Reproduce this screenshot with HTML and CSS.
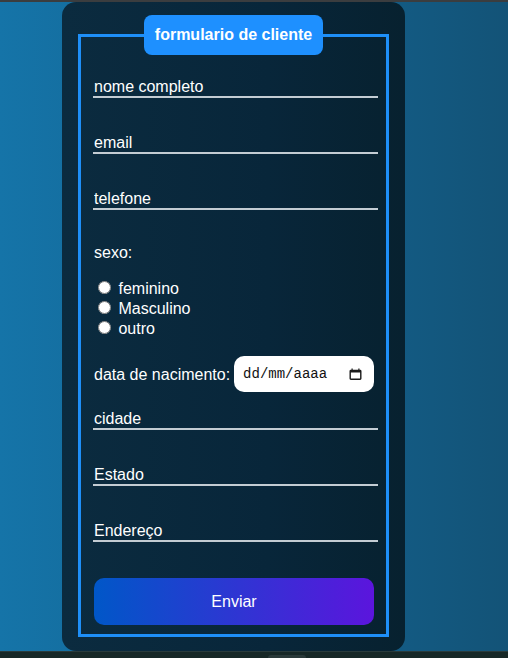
FILE: index.html
```html
<!DOCTYPE html>
<html lang="pt-BR">
<head>
<meta charset="utf-8">
<title>formulario de cliente</title>
<link rel="stylesheet" href="styles.css">
</head>
<body>
<div class="topbar"></div>
<main class="stage">
  <form class="card">
    <fieldset class="frame">
      <legend class="title">formulario de cliente</legend>
      <input class="field" type="text" placeholder="nome completo">
      <input class="field" type="email" placeholder="email">
      <input class="field" type="tel" placeholder="telefone">
      <p class="label">sexo:</p>
      <div class="radios">
        <div class="opt"><input type="radio" name="sexo" id="sx-f"> <label for="sx-f">feminino</label></div>
        <div class="opt"><input type="radio" name="sexo" id="sx-m"> <label for="sx-m">Masculino</label></div>
        <div class="opt"><input type="radio" name="sexo" id="sx-o"> <label for="sx-o">outro</label></div>
      </div>
      <div class="date-row">
        <span class="date-label">data de nacimento:</span>
        <div class="date">
          <span class="date-text">dd/mm/aaaa</span>
          <svg class="cal" width="13" height="14" viewBox="0 0 13 14" aria-hidden="true">
            <path d="M2.5 1.5h1.2v1.3h5.6V1.5h1.2v1.3h0.6A1.4 1.4 0 0 1 12.5 4.2v7.4a1.4 1.4 0 0 1-1.4 1.4H1.9A1.4 1.4 0 0 1 0.5 11.6V4.2A1.4 1.4 0 0 1 1.9 2.8h0.6z M1.9 5.6v6h9.2v-6z" fill="#1a1a1a" fill-rule="evenodd"/>
          </svg>
        </div>
      </div>
      <input class="field field-after-date" type="text" placeholder="cidade">
      <input class="field" type="text" placeholder="Estado">
      <input class="field field-last" type="text" placeholder="Endereço">
      <button class="send" type="button">Enviar</button>
    </fieldset>
  </form>
</main>
<div class="bottombar"><span class="tab"></span></div>
</body>
</html>
```

FILE: styles.css
```css
html, body {
  margin: 0;
  padding: 0;
}

body {
  width: 508px;
  height: 658px;
  overflow: hidden;
  display: flex;
  flex-direction: column;
  background: linear-gradient(90deg, #1574a8 0%, #13628f 55%, #135377 100%);
  font-family: "Liberation Sans", Arial, sans-serif;
  font-size: 16px;
  color: #ffffff;
}

.topbar {
  height: 2px;
  background: #3b3d3f;
  flex: none;
}

.stage {
  flex: 1;
  display: flex;
  min-height: 0;
}

.card {
  margin: 0 0 0 62px;
  width: 343px;
  height: 649px;
  box-sizing: border-box;
  border-radius: 14px;
  background: linear-gradient(90deg, #0b2b3f 0%, #08263a 60%, #07212f 100%);
  padding-top: 13px;
}

.frame {
  margin: 0 16px;
  padding: 21px 12px 9px;
  border: 3px solid #1e8ff8;
  min-width: 0;
}

.title {
  margin: 0 auto;
  padding: 0 11px;
  height: 40px;
  line-height: 40px;
  background: #1e90ff;
  border-radius: 8px;
  font-weight: bold;
  font-size: 16px;
  color: #ffffff;
}

.field {
  display: block;
  width: 285px;
  height: 22px;
  box-sizing: border-box;
  margin: 0 0 34px;
  padding: 2px 0 0 1px;
  border: 0;
  border-bottom: 2px solid #c3ccd3;
  background: transparent;
  color: #ffffff;
  font: inherit;
  outline: none;
}

.field::placeholder {
  color: #ffffff;
  opacity: 1;
}

.label {
  margin: 0 0 0 1px;
  line-height: 18px;
}

.radios {
  margin-top: 16px;
}

.opt {
  height: 20px;
  line-height: 20px;
}

.opt input {
  margin: 3px 3px 0 5px;
}

.date-row {
  margin-top: 18px;
  height: 36px;
  display: flex;
  align-items: center;
  gap: 4px;
  padding-left: 1px;
}

.date-label {
  flex: none;
  white-space: nowrap;
  padding-top: 2px;
}

.date {
  flex: none;
  width: 140px;
  height: 36px;
  box-sizing: border-box;
  background: #ffffff;
  border-radius: 10px;
  display: flex;
  align-items: center;
  justify-content: space-between;
  padding: 0 12px 0 9px;
}

.date-text {
  font-family: "Liberation Mono", "DejaVu Sans Mono", monospace;
  font-size: 14px;
  color: #111111;
}

.cal {
  display: block;
}

.field-after-date {
  margin-top: 16px;
}

.field-last {
  margin-bottom: 36px;
}

.send {
  display: block;
  margin-left: 1px;
  width: 280px;
  height: 47px;
  border: 0;
  border-radius: 10px;
  background: linear-gradient(90deg, #0057c8 0%, #5b15dd 100%);
  color: #ffffff;
  font: inherit;
  cursor: pointer;
}

.bottombar {
  height: 7px;
  flex: none;
  background: #172827;
  border-top: 1px solid #2a3b3b;
  box-sizing: border-box;
  position: relative;
}

.tab {
  position: absolute;
  left: 268px;
  top: 3px;
  width: 38px;
  height: 4px;
  border-radius: 3px 3px 0 0;
  background: #2a3a3a;
}
```
